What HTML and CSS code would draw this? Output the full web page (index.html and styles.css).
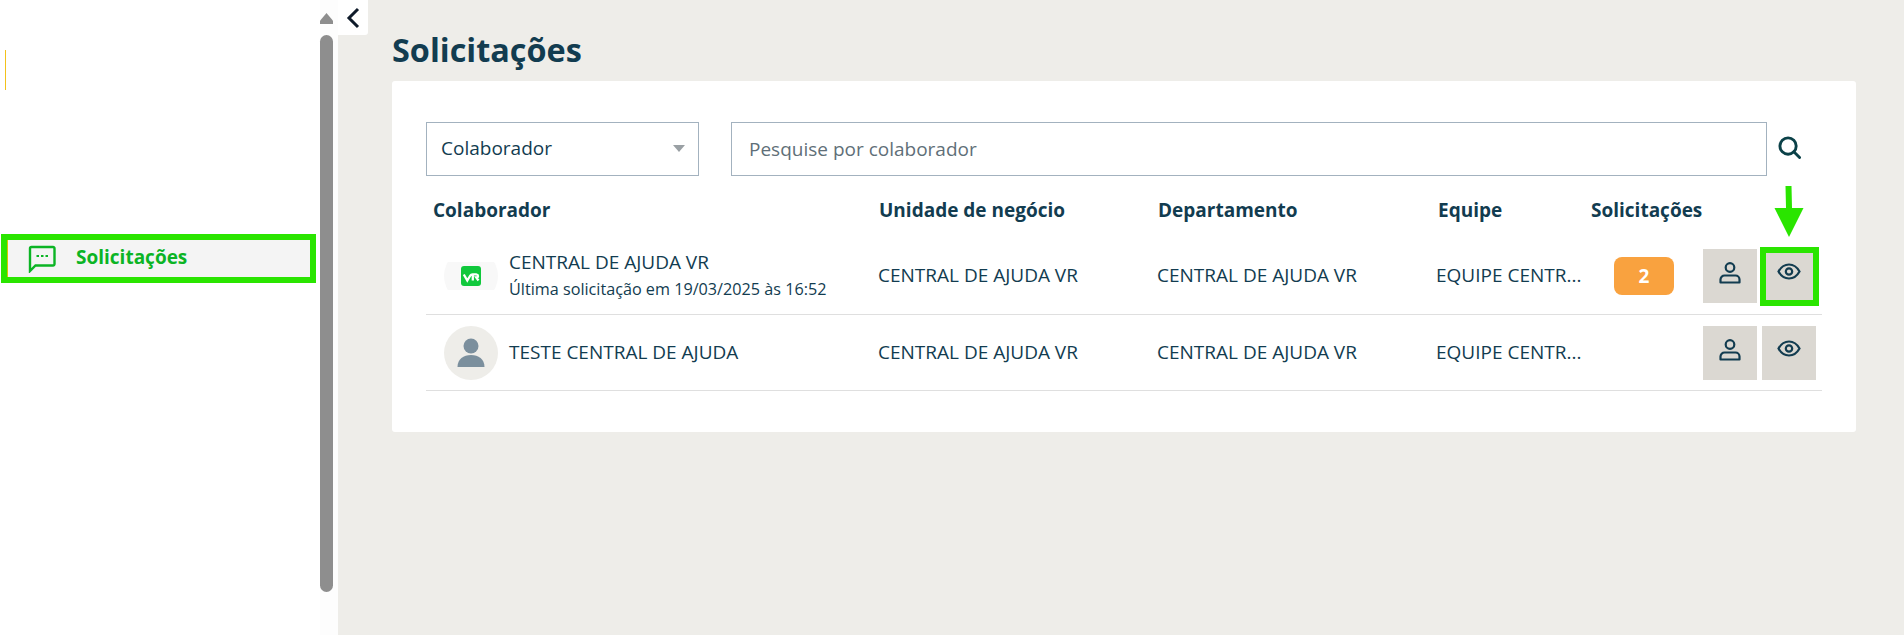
FILE: index.html
```html
<!DOCTYPE html>
<html lang="pt-BR">
<head>
<meta charset="utf-8">
<title>Solicitações</title>
<link rel="stylesheet" href="styles.css">
</head>
<body>
<div class="app">
  <aside class="sidebar">
    <nav class="nav">
      <div class="brand-mark"></div>
      <a class="nav-item">
        <svg class="nav-icon" viewBox="0 0 28 28" fill="none" stroke="currentColor" stroke-width="2.4"><path d="M2 26V3.500A1.500 1.500 0 0 1 3.500 2H25a1.500 1.500 0 0 1 1.500 1.500V19a1.500 1.500 0 0 1-1.500 1.500H7.500z"/><path d="M8.500 11h2.500M13 11h2.500M17.500 11h2.500" stroke-width="2.200"/></svg>
        <span>Solicitações</span>
      </a>
    </nav>
    <div class="scrollbar">
      <div class="scroll-arrow"></div>
      <div class="scroll-thumb"></div>
    </div>
  </aside>
  <button class="collapse" aria-label="Recolher">
    <svg viewBox="0 0 14 22" width="14" height="22" fill="none" stroke="#0f1b2a" stroke-width="3"><path d="M12 2 3 11l9 9"/></svg>
  </button>
  <main class="main">
    <h1 class="title">Solicitações</h1>
    <section class="card">
      <div class="filters">
        <div class="select"><span>Colaborador</span><i class="caret"></i></div>
        <div class="search"><span>Pesquise por colaborador</span></div>
        <svg class="search-icon" viewBox="0 0 24 24" fill="none" stroke="#0b4148" stroke-width="3"><circle cx="10.500" cy="10.500" r="8.500"/><path d="m16.500 16.500 6 6" stroke-linecap="round"/></svg>
      </div>
      <div class="row head">
        <div class="c-name">Colaborador</div>
        <div>Unidade de negócio</div>
        <div>Departamento</div>
        <div>Equipe</div>
        <div>Solicitações</div>
      </div>
      <div class="row item">
        <div class="c-user">
          <div class="logo-clip"><div class="logo-disc">
            <svg viewBox="0 0 20 20" width="20" height="20"><rect width="20" height="20" rx="3" fill="#10c83c"/><path d="M2.800 8.500 6.300 14.500 9.300 9.500Q10 8.300 11.500 8.300H15.800M11.800 8.500V14.500M15.500 8.300Q17 8.500 17 10T15.300 11.500L17.500 14.500" fill="none" stroke="#fff" stroke-width="2.300"/></svg>
          </div></div>
          <div class="who">
            <div class="name">CENTRAL DE AJUDA VR</div>
            <div class="sub">Última solicitação em 19/03/2025 às 16:52</div>
          </div>
        </div>
        <div class="cell">CENTRAL DE AJUDA VR</div>
        <div class="cell">CENTRAL DE AJUDA VR</div>
        <div class="cell">EQUIPE CENTR...</div>
        <div class="c-badge"><span class="badge">2</span></div>
        <div class="actions">
          <button class="act"><svg viewBox="0 0 24 24" width="24" height="24" fill="none" stroke="#123c50" stroke-width="2.200"><circle cx="12" cy="6.500" r="4.300"/><path d="M2.500 21.500v-3a4 4 0 0 1 4-4h11a4 4 0 0 1 4 4v3z" stroke-linejoin="round"/></svg></button>
          <button class="act act-mark"><svg viewBox="0 0 24 24" width="24" height="24" fill="none" stroke="#123c50" stroke-width="2.200"><path d="M1.500 10.500C4 6 8 3.500 12 3.500s8 2.500 10.500 7c-2.500 4.500-6.500 7-10.500 7s-8-2.500-10.500-7z"/><circle cx="12" cy="10.500" r="3.200"/></svg>
            <svg class="mark-arrow" viewBox="0 0 30 52" width="30" height="52"><path d="M11.500 0h6l.5 22h11.500L15 51 .5 22h11.500z" fill="#2ae500"/></svg>
            <span class="mark-box"></span>
          </button>
        </div>
      </div>
      <div class="row item">
        <div class="c-user">
          <div class="avatar">
            <svg viewBox="0 0 54 54" width="54" height="54" fill="#7b8f9d"><circle cx="27" cy="20" r="7.500"/><path d="M13.500 41c0-8 6-12 13.500-12s13.500 4 13.500 12z"/></svg>
          </div>
          <div class="who"><div class="name">TESTE CENTRAL DE AJUDA</div></div>
        </div>
        <div class="cell">CENTRAL DE AJUDA VR</div>
        <div class="cell">CENTRAL DE AJUDA VR</div>
        <div class="cell">EQUIPE CENTR...</div>
        <div class="c-badge"></div>
        <div class="actions">
          <button class="act"><svg viewBox="0 0 24 24" width="24" height="24" fill="none" stroke="#123c50" stroke-width="2.200"><circle cx="12" cy="6.500" r="4.300"/><path d="M2.500 21.500v-3a4 4 0 0 1 4-4h11a4 4 0 0 1 4 4v3z" stroke-linejoin="round"/></svg></button>
          <button class="act"><svg viewBox="0 0 24 24" width="24" height="24" fill="none" stroke="#123c50" stroke-width="2.200"><path d="M1.500 10.500C4 6 8 3.500 12 3.500s8 2.500 10.500 7c-2.500 4.500-6.500 7-10.500 7s-8-2.500-10.500-7z"/><circle cx="12" cy="10.500" r="3.200"/></svg></button>
        </div>
      </div>
    </section>
  </main>
</div>
</body>
</html>
```
FILE: styles.css
```css
* { box-sizing: border-box; }
html, body { margin: 0; height: 100%; overflow: hidden; }
body { font-family: "Open Sans", "Noto Sans", sans-serif; color: #123c50; background: #eeede9; }
.app { display: flex; height: 635px; position: relative; }

.sidebar { width: 338px; flex: none; display: flex; background: #fff; }
.nav { width: 320px; flex: none; padding: 50px 10px 0 7px; }
.brand-mark { width: 1px; height: 40px; margin-left: -2px; background: #f3c21b; }
.nav-item { display: flex; align-items: center; height: 37px; margin-top: 150px; padding-left: 20px; gap: 20px; background: #f4f4f4; border-left: 1px solid #d6c400; color: #0bb424; font-size: 19px; font-weight: 700; outline: 6px solid #2ae500; padding-bottom: 3px; }
.nav-icon { width: 28px; height: 28px; flex: none; margin-top: 3px; }

.scrollbar { width: 18px; flex: none; background: #fdfdfd; display: flex; flex-direction: column; align-items: flex-start; padding-top: 13px; }
.scroll-arrow { width: 13px; height: 11px; background: #8e8e8e; clip-path: polygon(50% 0, 100% 70%, 100% 100%, 0 100%, 0 70%); }
.scroll-thumb { width: 13px; height: 557px; margin-top: 11px; border-radius: 7px; background: #8e8e8e; }

.collapse { position: absolute; left: 338px; top: 0; width: 30px; height: 35px; padding: 0; border: 0; background: #fff; border-radius: 0 0 3px 0; display: flex; align-items: center; justify-content: center; }

.main { flex: 1; min-width: 0; padding: 0 48px 0 54px; }
.title { margin: 0; height: 81px; padding-top: 28px; font-size: 32.400px; line-height: 42px; font-weight: 700; color: #123c50; }

.card { background: #fff; border-radius: 3px; height: 351px; padding: 41px 34px 0; }
.filters { display: flex; align-items: center; height: 54px; }
.select, .search { height: 54px; border: 1px solid #a3b2bf; display: flex; align-items: center; font-size: 19px; }
.select { width: 273px; flex: none; padding: 0 14px 2px; justify-content: space-between; color: #123c50; }
.caret { width: 0; height: 0; border: 6px solid transparent; border-top: 7px solid #9aa0a4; border-bottom: 0; margin-right: -1px; }
.search { flex: 1; margin-left: 32px; padding-left: 17px; color: #5f6f78; }
.search-icon { width: 23px; height: 23px; flex: none; margin: 0 21px 4px 11px; }

.row { display: grid; grid-template-columns: 452px 279px 279px 155px 112px 1fr; align-items: center; }
.head { height: 55px; padding-left: 7px; grid-template-columns: 446px 279px 280px 153px 1fr; font-size: 19px; font-weight: 700; padding-top: 13px; }
.item { height: 76px; border-bottom: 1px solid #dfdfdf; font-size: 19px; }
.head + .item { height: 84px; padding-top: 6px; }
.cell { padding-bottom: 1px; }
.c-user { display: flex; align-items: center; padding-left: 18px; gap: 11px; }
.logo-clip { width: 54px; height: 28px; overflow: hidden; flex: none; display: flex; align-items: center; justify-content: center; }
.logo-disc { width: 54px; height: 54px; flex: none; border-radius: 50%; background: #f8f8f8; display: flex; align-items: center; justify-content: center; }
.avatar { width: 54px; height: 54px; flex: none; border-radius: 50%; background: #eeede9; }
.avatar svg { display: block; }
.name { line-height: 25px; }
.sub { font-size: 16.200px; line-height: 25px; margin-top: 2px; white-space: nowrap; }
.who { white-space: nowrap; }
.c-badge { display: flex; padding-left: 23px; }
.badge { width: 60px; height: 38px; border-radius: 8px; background: #f9a23f; color: #fff; font-weight: 700; font-size: 19px; display: flex; align-items: center; justify-content: center; }
.actions { display: flex; gap: 5px; }
.act { position: relative; width: 54px; height: 54px; padding: 0 0 6px; border: 0; background: #dbd8d2; display: flex; align-items: center; justify-content: center; }
.mark-box { position: absolute; left: -2px; top: -2px; width: 59px; height: 59px; border: 6px solid #2ae500; }
.mark-arrow { position: absolute; left: 12px; top: -63px; }
```
